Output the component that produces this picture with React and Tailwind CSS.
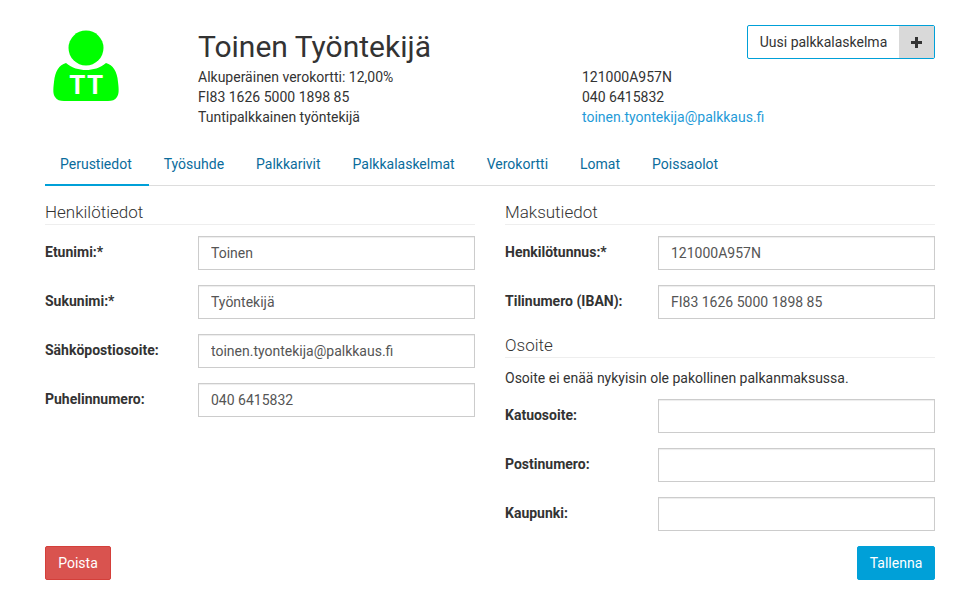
import React from 'react';

const tabs = ['Perustiedot', 'Työsuhde', 'Palkkarivit', 'Palkkalaskelmat', 'Verokortti', 'Lomat', 'Poissaolot'];

const Avatar = () => (
    <svg width="70" height="76" viewBox="0 0 70 76" className="block">
        <circle cx="34" cy="18" r="17.5" fill="#00ff00" />
        <path d="M14 33 C20 38 27 40 34 40 C41 40 48 38 54 33 C61 35 65 41 66 52 C67 60 67 64 65 67 C63 70 60 71 56 71 L12 71 C8 71 5 70 3 67 C1 64 1 60 2 52 C3 41 7 35 14 33 Z" fill="#00ff00" />
        <text x="35" y="64" textAnchor="middle" fill="#ffffff" fontSize="26" fontWeight="700" letterSpacing="1.5" fontFamily="Roboto, sans-serif">TT</text>
    </svg>
);

const Field = ({ label, value }) => (
    <div className="flex items-start mb-[15px]">
        <label className="w-[153px] shrink-0 font-bold pt-[6px] leading-5 text-[#333]">{label}</label>
        <input
            type="text"
            readOnly
            value={value}
            className="flex-1 min-w-0 h-[34px] border border-[#ccc] px-3 text-[14px] text-[#555] bg-white outline-none shadow-[inset_0_1px_1px_rgba(0,0,0,0.075)]"
        />
    </div>
);

const SectionTitle = ({ children, className = 'mb-[11px]' }) => (
    <h3 className={`text-[17px] font-light leading-[16px] text-[#333] border-b border-[#eee] pb-[4px] ${className}`}>{children}</h3>
);

export default function App() {
    return (
        <div className="w-[956px] h-[612px] bg-white pl-[45px] pr-[21px] pt-[25px] text-[14px] leading-5 text-[#333] font-['Roboto',sans-serif]">
            {/* Header */}
            <div className="flex h-[111px]">
                <div className="w-[153px] shrink-0 pl-[7px] pt-[5px]">
                    <Avatar />
                </div>
                <div className="flex-1">
                    <h1 className="text-[30px] pt-px leading-[41px] mb-0 text-[#333]">Toinen Työntekijä</h1>
                    <div className="flex">
                        <div className="w-[384px]">
                            <div>Alkuperäinen verokortti: 12,00%</div>
                            <div>FI83 1626 5000 1898 85</div>
                            <div>Tuntipalkkainen työntekijä</div>
                        </div>
                        <div>
                            <div>121000A957N</div>
                            <div>040 6415832</div>
                            <a href="#" className="text-[#1f9bd8]">toinen.tyontekija@palkkaus.fi</a>
                        </div>
                    </div>
                </div>
                <div className="w-0 flex justify-end">
                    <button className="shrink-0 flex h-[34px] border border-[#00a0d8] rounded-[2px] overflow-hidden bg-white">
                        <span className="w-[151px] h-full flex items-center justify-center text-[#333]">Uusi palkkalaskelma</span>
                        <span className="w-[35px] h-full flex items-center justify-center bg-[#d9d9d9]">
                            <svg width="11" height="11" viewBox="0 0 11 11">
                                <path d="M4 0h3v4h4v3H7v4H4V7H0V4h4z" fill="#333" />
                            </svg>
                        </span>
                    </button>
                </div>
            </div>

            {/* Tabs */}
            <div className="flex h-[50px] border-b border-[#ddd]">
                {tabs.map((t, i) => (
                    <a
                        key={t}
                        href="#"
                        className={`pl-[15px] pr-[17px] pt-[18px] pb-0 h-[50px] -mb-px text-[#0a6c9c] ${i === 0 ? 'border-b-2 border-[#00a0d8]' : ''}`}
                    >
                        {t}
                    </a>
                ))}
            </div>

            {/* Form */}
            <div className="flex gap-[30px] pt-[18px]">
                <div className="w-[430px]">
                    <SectionTitle>Henkilötiedot</SectionTitle>
                    <Field label="Etunimi:*" value="Toinen" />
                    <Field label="Sukunimi:*" value="Työntekijä" />
                    <Field label="Sähköpostiosoite:" value="toinen.tyontekija@palkkaus.fi" />
                    <Field label="Puhelinnumero:" value="040 6415832" />
                </div>
                <div className="w-[430px]">
                    <SectionTitle>Maksutiedot</SectionTitle>
                    <Field label="Henkilötunnus:*" value="121000A957N" />
                    <Field label="Tilinumero (IBAN):" value="FI83 1626 5000 1898 85" />
                    <SectionTitle className="mt-[18px] mb-[10px]">Osoite</SectionTitle>
                    <p className="mb-[11px]">Osoite ei enää nykyisin ole pakollinen palkanmaksussa.</p>
                    <Field label="Katuosoite:" value="" />
                    <Field label="Postinumero:" value="" />
                    <Field label="Kaupunki:" value="" />
                </div>
            </div>

            {/* Actions */}
            <div className="flex justify-between">
                <button className="h-[34px] w-[66px] bg-[#d9534f] border border-[#d43f3a] rounded-[2px] text-white">Poista</button>
                <button className="h-[34px] w-[78px] bg-[#00a0d8] border border-[#00a0d8] rounded-[2px] text-white">Tallenna</button>
            </div>
        </div>
    );
}
